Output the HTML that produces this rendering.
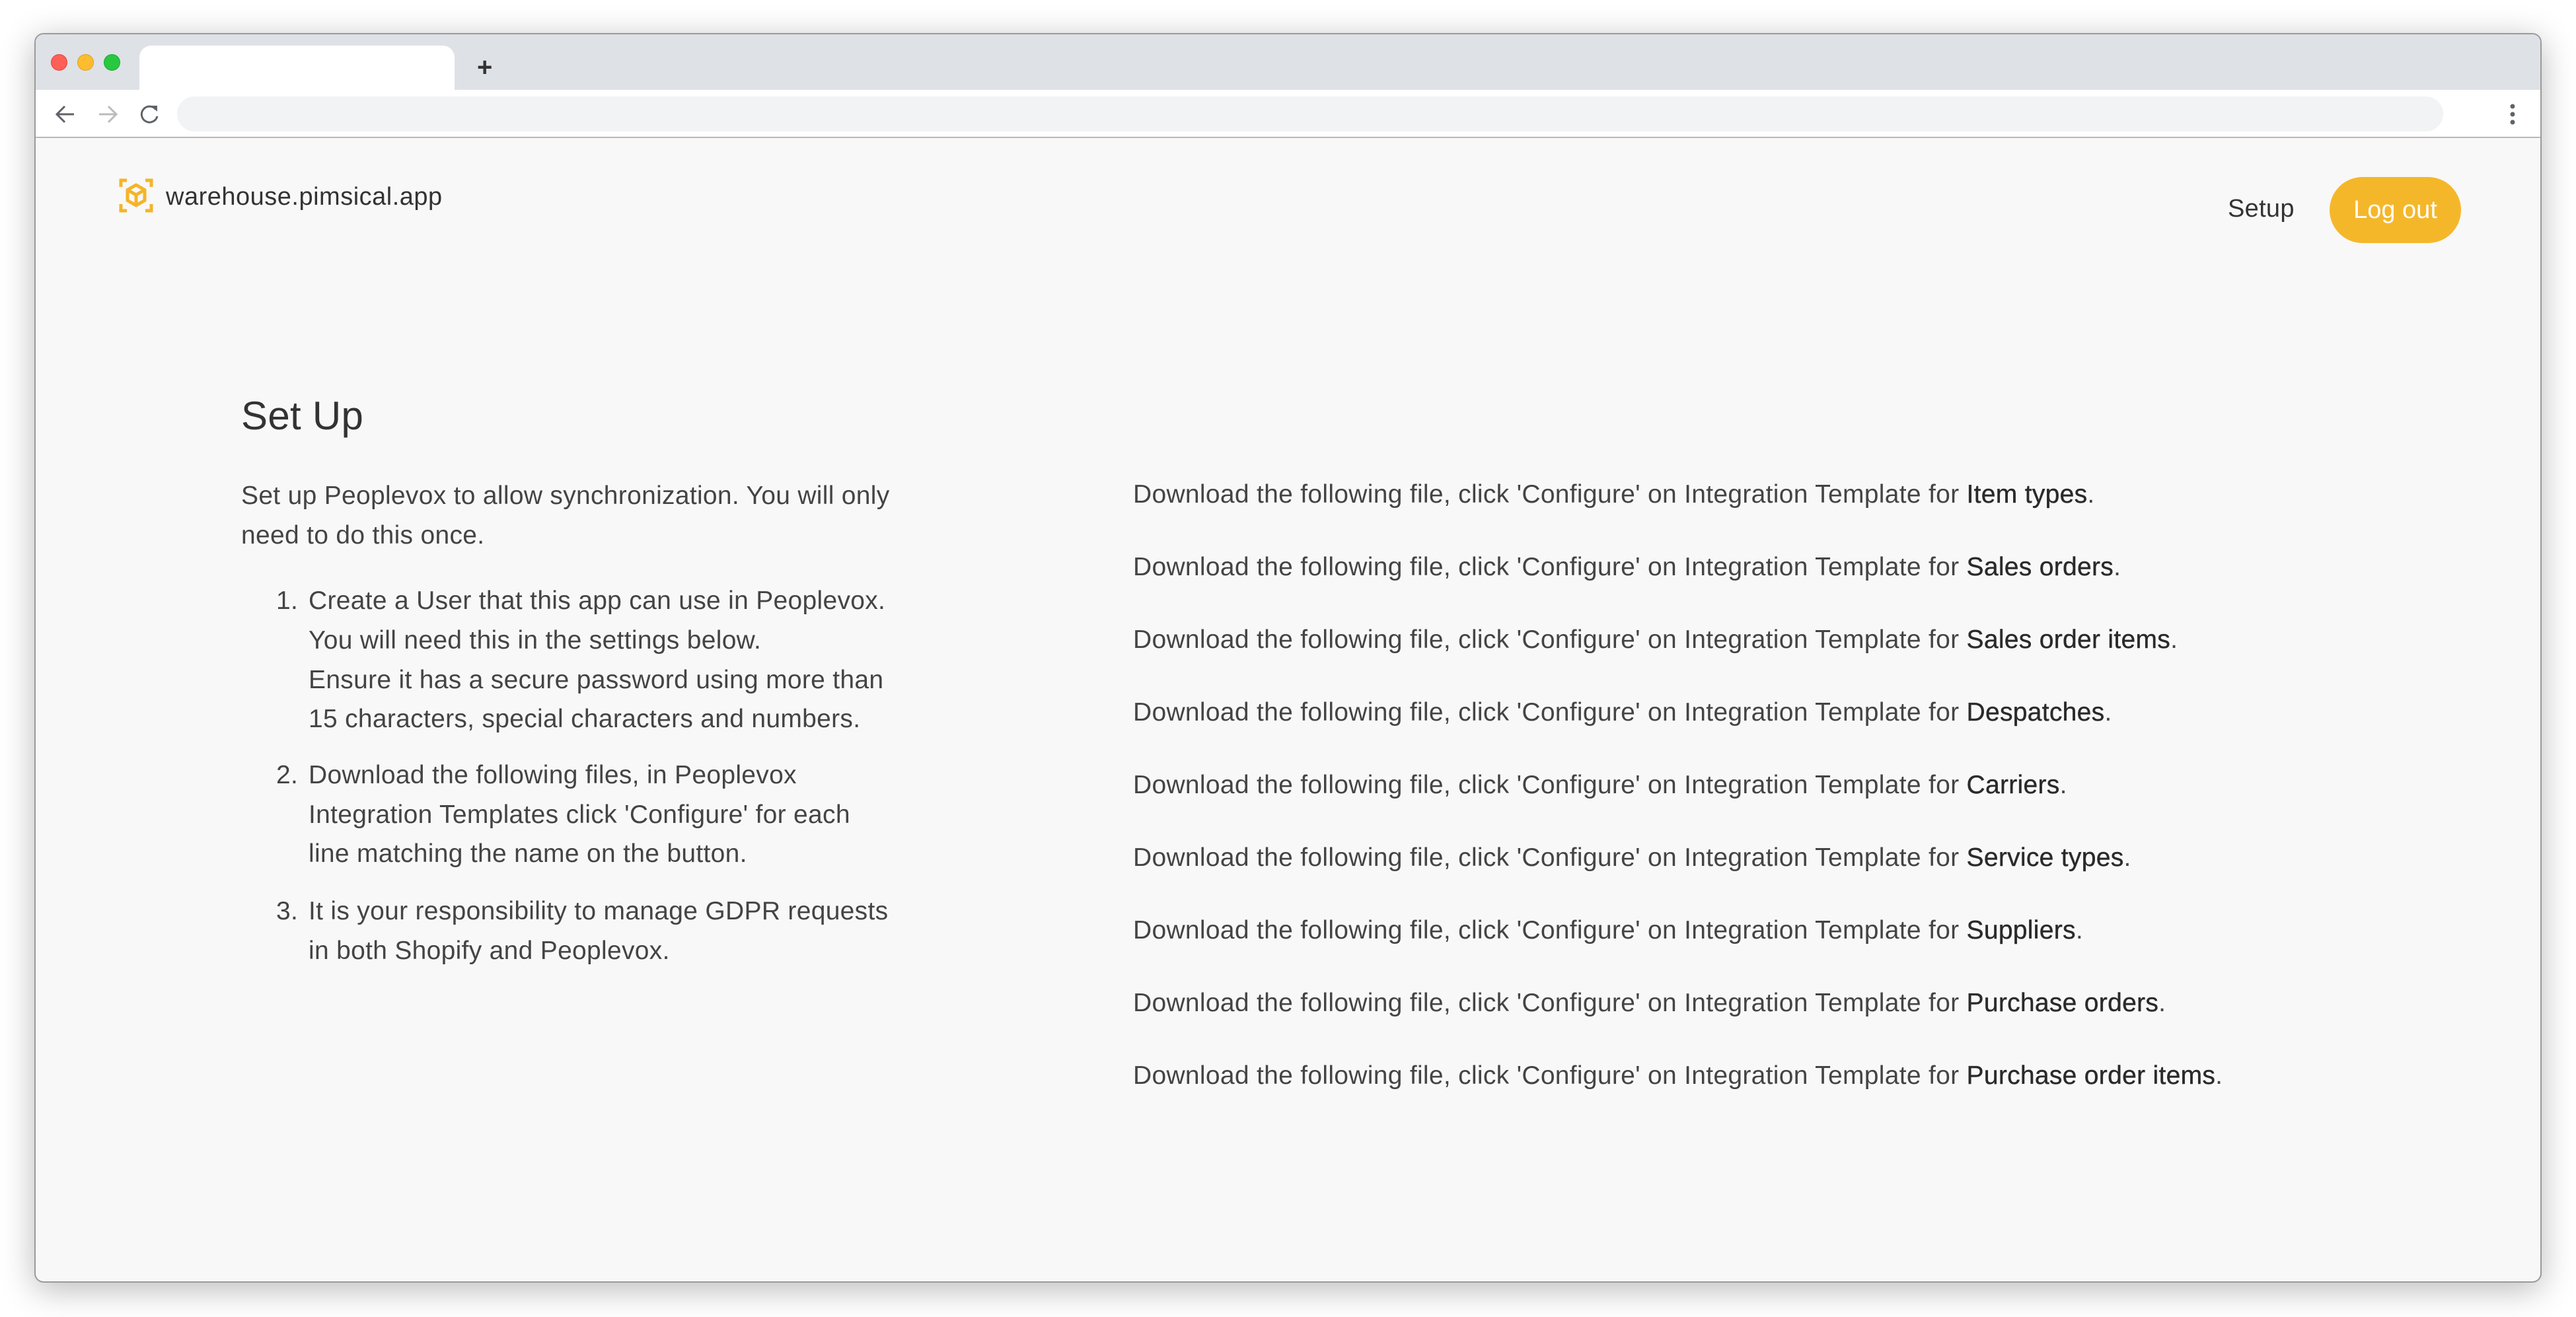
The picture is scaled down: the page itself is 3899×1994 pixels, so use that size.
<!DOCTYPE html>
<html><head><meta charset="utf-8"><style>
*{margin:0;padding:0;box-sizing:border-box}
body{width:3899px;height:1994px;background:#fff;position:relative;overflow:hidden;font-family:"Liberation Sans",sans-serif;color:#444}
.win{position:absolute;left:52px;top:50px;width:3795px;height:1892px;background:#f8f8f8;border:2px solid #9a9a9a;border-radius:14px;overflow:hidden;box-shadow:0 10px 50px rgba(0,0,0,.28)}
.tabbar{position:absolute;left:0;top:0;width:100%;height:84px;background:#dee1e6}
.tab{position:absolute;left:157px;top:17px;width:477px;height:67px;background:#fff;border-radius:18px 18px 0 0}
.dot{position:absolute;top:30px;width:25px;height:25px;border-radius:50%}
.toolbar{position:absolute;left:0;top:84px;width:100%;height:73px;background:#fff;border-bottom:2px solid #b8b8b8}
.addr{position:absolute;left:214px;top:10px;width:3430px;height:53px;background:#f1f3f4;border-radius:27px}
.t{position:absolute;white-space:nowrap;font-size:39px;line-height:60px;letter-spacing:0.3px}
b{font-weight:normal;color:#2a2a2a;-webkit-text-stroke:0.4px #2a2a2a}
</style></head><body>
<div class="win">
 <div class="tabbar">
  <div class="dot" style="left:23px;background:#fe5f57;border:1px solid #e0443e"></div>
  <div class="dot" style="left:63px;background:#febc2e;border:1px solid #dea123"></div>
  <div class="dot" style="left:103px;background:#28c840;border:1px solid #1aab29"></div>
  <div class="tab"></div>
  <div style="position:absolute;left:668px;top:30px;font-size:40px;line-height:40px;color:#333;font-weight:bold">+</div>
 </div>
 <div class="toolbar">
  <svg style="position:absolute;left:28px;top:20px" width="34" height="34" viewBox="0 0 34 34"><path d="M30 17H5M16 5L4 17l12 12" fill="none" stroke="#5f6368" stroke-width="3"/></svg>
  <svg style="position:absolute;left:92px;top:20px" width="34" height="34" viewBox="0 0 34 34"><path d="M4 17h25M18 5l12 12-12 12" fill="none" stroke="#bbb" stroke-width="3"/></svg>
  <svg style="position:absolute;left:156px;top:20px" width="34" height="34" viewBox="0 0 34 34"><path d="M26 10A12 12 0 1 0 28 20" fill="none" stroke="#5f6368" stroke-width="3"/><path d="M19 4h9v9z" fill="#5f6368"/></svg>
  <div class="addr"></div>
  <svg style="position:absolute;left:3743px;top:20px" width="12" height="34" viewBox="0 0 12 34"><circle cx="6" cy="5" r="3.5" fill="#5f6368"/><circle cx="6" cy="17" r="3.5" fill="#5f6368"/><circle cx="6" cy="29" r="3.5" fill="#5f6368"/></svg>
 </div>

 <svg style="position:absolute;left:126px;top:218px" width="52" height="52" viewBox="0 0 52 52" fill="none" stroke="#f5b428" stroke-width="5">
  <path d="M3 13V3h9M40 3h9v10M49 39v10h-9M12 49H3V39"/>
  <path d="M26 10l13 7.5v16L26 41 13 33.5v-16z" stroke-linejoin="round"/>
  <path d="M13 17.5l13 7.5 13-7.5M26 25v16" stroke-linejoin="round"/>
 </svg>
 <div class="t" style="left:197px;top:216px;font-size:38px;color:#333;letter-spacing:0.5px">warehouse.pimsical.app</div>

 <div class="t" style="left:3318px;top:234px;font-size:38px;color:#333">Setup</div>
 <div style="position:absolute;left:3472px;top:216px;width:199px;height:100px;border-radius:50px;background:#f5b72a;color:#fff;font-size:38px;line-height:100px;text-align:center">Log out</div>

 <div class="t" style="left:311px;top:543px;font-size:60px;line-height:70px;color:#333">Set Up</div>

 <div class="t" style="left:311px;top:669px">Set up Peoplevox to allow synchronization. You will only</div>
 <div class="t" style="left:311px;top:729px">need to do this once.</div>

 <div class="t" style="left:364px;top:828px">1.</div>
 <div class="t" style="left:413px;top:828px">Create a User that this app can use in Peoplevox.</div>
 <div class="t" style="left:413px;top:888px">You will need this in the settings below.</div>
 <div class="t" style="left:413px;top:948px">Ensure it has a secure password using more than</div>
 <div class="t" style="left:413px;top:1007px">15 characters, special characters and numbers.</div>
 <div class="t" style="left:364px;top:1092px">2.</div>
 <div class="t" style="left:413px;top:1092px">Download the following files, in Peoplevox</div>
 <div class="t" style="left:413px;top:1152px">Integration Templates click 'Configure' for each</div>
 <div class="t" style="left:413px;top:1211px">line matching the name on the button.</div>
 <div class="t" style="left:364px;top:1298px">3.</div>
 <div class="t" style="left:413px;top:1298px">It is your responsibility to manage GDPR requests</div>
 <div class="t" style="left:413px;top:1358px">in both Shopify and Peoplevox.</div>

 <div class="t" style="left:1661px;top:667px">Download the following file, click 'Configure' on Integration Template for <b>Item types</b>.</div>
 <div class="t" style="left:1661px;top:777px">Download the following file, click 'Configure' on Integration Template for <b>Sales orders</b>.</div>
 <div class="t" style="left:1661px;top:887px">Download the following file, click 'Configure' on Integration Template for <b>Sales order items</b>.</div>
 <div class="t" style="left:1661px;top:997px">Download the following file, click 'Configure' on Integration Template for <b>Despatches</b>.</div>
 <div class="t" style="left:1661px;top:1107px">Download the following file, click 'Configure' on Integration Template for <b>Carriers</b>.</div>
 <div class="t" style="left:1661px;top:1217px">Download the following file, click 'Configure' on Integration Template for <b>Service types</b>.</div>
 <div class="t" style="left:1661px;top:1327px">Download the following file, click 'Configure' on Integration Template for <b>Suppliers</b>.</div>
 <div class="t" style="left:1661px;top:1437px">Download the following file, click 'Configure' on Integration Template for <b>Purchase orders</b>.</div>
 <div class="t" style="left:1661px;top:1547px">Download the following file, click 'Configure' on Integration Template for <b>Purchase order items</b>.</div>
</div>
</body></html>
